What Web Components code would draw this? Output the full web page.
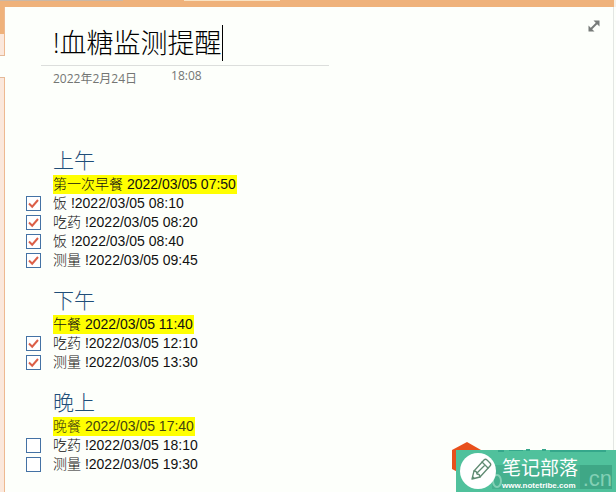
<!DOCTYPE html>
<html lang="zh-CN">
<head>
<meta charset="utf-8">
<title>!血糖监测提醒</title>
<style>
  html, body { height: 100%; }
  body {
    margin: 0;
    overflow: hidden;
    background: #fdfffb;
    font-family: "Liberation Sans", "Noto Sans CJK SC", sans-serif;
  }
</style>
</head>
<body>
<note-window>
  <note-title slot="head" date="2022年2月24日" time="18:08">!血糖监测提醒</note-title>
  <note-section heading="上午" mark="第一次早餐 2022/03/05 07:50">
    <todo-item checked>饭 !2022/03/05 08:10</todo-item>
    <todo-item checked>吃药 !2022/03/05 08:20</todo-item>
    <todo-item checked>饭 !2022/03/05 08:40</todo-item>
    <todo-item checked>测量 !2022/03/05 09:45</todo-item>
  </note-section>
  <note-section heading="下午" mark="午餐 2022/03/05 11:40">
    <todo-item checked>吃药 !2022/03/05 12:10</todo-item>
    <todo-item checked>测量 !2022/03/05 13:30</todo-item>
  </note-section>
  <note-section heading="晚上" mark="晚餐 2022/03/05 17:40" soft>
    <todo-item>吃药 !2022/03/05 18:10</todo-item>
    <todo-item>测量 !2022/03/05 19:30</todo-item>
  </note-section>
  <site-badge slot="badge"></site-badge>
</note-window>

<script>
(() => {
  class NoteWindow extends HTMLElement {
    constructor() {
      super();
      this.attachShadow({ mode: 'open' });
      this.shadowRoot.innerHTML = `
        <style>
          :host {
            display: grid;
            grid-template: 7px 1fr / 5px 1fr;
            position: relative;
            height: 100%;
          }
          .bar {
            grid-column: 1 / -1;
            background: linear-gradient(90deg, #cbb8a6 0 123px, #efb27b 123px 184px, #f9e3c4 184px 280px, #efb27b 280px) top / 100% 1px no-repeat #efb27b;
            border-right: 2px solid #f4f0e8;
          }
          .rail { display: flex; flex-direction: column; }
          .rail i { box-sizing: border-box; border-right: 1px solid #eeb990; background: #fbe8dc; }
          .rail .current { height: 27px; background: #efb27b; }
          .rail .tab { height: 22px; border-bottom: 1px solid #e3b99a; }
          .rail .gap { height: 21px; background: none; border: 0; }
          .rail .rest { flex: 1; border-top: 1px solid #e3b99a; }
          main {
            box-sizing: border-box;
            padding: 17px 0 0 20px;
            margin-right: 2px;
            border-right: 1px solid #e3e6e3;
          }
          .body { display: grid; gap: 16px; padding-top: 57px; }
          button {
            position: absolute;
            top: 18px;
            right: 14px;
            padding: 2px;
            border: 0;
            background: none;
          }
          button svg { display: block; }
          ::slotted([slot="badge"]) { position: absolute; right: 0; bottom: 0; }
        </style>
        <div class="bar"></div>
        <div class="rail"><i class="current"></i><i class="tab"></i><i class="gap"></i><i class="rest"></i></div>
        <main>
          <slot name="head"></slot>
          <div class="body"><slot></slot></div>
        </main>
        <button type="button" aria-label="全屏">
          <svg width="12" height="12" viewBox="0 0 12 12">
            <path d="M5.500 .5h6v6zM.5 5.500v6h6z" fill="#777b79"/>
            <path d="M2.500 9.500l7-7" stroke="#777b79" stroke-width="2"/>
          </svg>
        </button>
        <slot name="badge"></slot>
      `;
    }
  }

  class NoteTitle extends HTMLElement {
    constructor() {
      super();
      this.attachShadow({ mode: 'open' });
      this.shadowRoot.innerHTML = `
        <style>
          :host { display: block; width: 50%; max-width: 288px; margin-left: 16px; }
          h1 {
            display: flex;
            align-items: center;
            margin: 0;
            padding: 0 0 4px 12px;
            border-bottom: 1px solid #dcdedc;
            font: 300 27px/37px "Open Sans", "Noto Sans CJK SC", sans-serif;
            color: #000;
          }
          .caret { width: 1px; height: 36px; background: #000; }
          .meta {
            display: flex;
            gap: 34px;
            padding-left: 12px;
            font: 12px/20px "Open Sans", "Noto Sans CJK SC", sans-serif;
            color: #747674;
          }
          .date { padding-top: 3px; }
        </style>
        <h1><slot></slot><span class="caret"></span></h1>
        <div class="meta"><span class="date"></span><span class="time"></span></div>
      `;
    }

    connectedCallback() {
      this.shadowRoot.querySelector('.date').textContent = this.getAttribute('date');
      this.shadowRoot.querySelector('.time').textContent = this.getAttribute('time');
    }
  }

  class NoteSection extends HTMLElement {
    constructor() {
      super();
      this.attachShadow({ mode: 'open' });
      this.shadowRoot.innerHTML = `
        <style>
          :host { display: block; }
          h2 {
            margin: 0 0 0 28px;
            padding-bottom: 2px;
            font: 300 21px/27px "Noto Sans CJK SC", sans-serif;
            color: #1f4e79;
          }
          p { margin: 0 0 0 28px; font-size: 14px; font-weight: 300; line-height: 19px; }
          mark { display: inline-block; padding-right: 1px; background: #ff0; color: #111; }
          :host([soft]) mark { color: #444410; }
        </style>
        <h2></h2>
        <p><mark></mark></p>
        <slot></slot>
      `;
    }

    connectedCallback() {
      this.shadowRoot.querySelector('h2').textContent = this.getAttribute('heading');
      this.shadowRoot.querySelector('mark').textContent = this.getAttribute('mark');
    }
  }

  class TodoItem extends HTMLElement {
    constructor() {
      super();
      this.attachShadow({ mode: 'open' });
      this.shadowRoot.innerHTML = `
        <style>
          :host { display: block; font-size: 14px; font-weight: 300; line-height: 19px; color: #111; }
          label { display: flex; align-items: center; gap: 12px; height: 19px; }
          input {
            appearance: none;
            box-sizing: border-box;
            width: 15px;
            height: 15px;
            margin: 0 0 0 1px;
            border: 1px solid #4472a4;
            background: #fff;
          }
          input:checked {
            background: #fff url("data:image/svg+xml,%3Csvg xmlns='http://www.w3.org/2000/svg' viewBox='0 0 13 13'%3E%3Cpath d='M2 6.500L5.200 9.700 11 3' fill='none' stroke='%23dc5f47' stroke-width='2'/%3E%3C/svg%3E");
          }
        </style>
        <label><input type="checkbox"><span><slot></slot></span></label>
      `;
    }

    connectedCallback() {
      this.shadowRoot.querySelector('input').checked = this.hasAttribute('checked');
    }
  }

  class SiteBadge extends HTMLElement {
    constructor() {
      super();
      this.attachShadow({ mode: 'open' });
      this.shadowRoot.innerHTML = `
        <style>
          :host { display: block; width: 164px; height: 50px; }
          .back { position: absolute; left: 0; top: 0; }
          .ghost {
            position: absolute;
            right: 4px;
            bottom: 2px;
            font: 22px/22px "Liberation Sans", sans-serif;
            color: #83d0b5;
          }
          a {
            position: absolute;
            inset: 8px 0 0 4px;
            display: flex;
            align-items: center;
            gap: 6px;
            padding-left: 4px;
            color: #fff;
            text-decoration: none;
          }
          .text { display: grid; }
          strong { font: 400 19px/28px "Noto Sans CJK SC", sans-serif; }
          small { font: bold 8px/9px "Liberation Sans", sans-serif; }
        </style>
        <svg class="back" width="164" height="50" viewBox="0 0 164 50">
          <path d="M15 0L29 8V27L15 35 0 27V8z" fill="#e8501c"/>
          <path d="M4 8h160v42H4z" fill="#50c19c"/>
          <path d="M46 8h6v2h-6zM57 8h14v1H57zM74 7h4v2h-4zM90 7h4v2h-4zM98 8h56v2H98z" fill="#35a78b"/>
          <path d="M40 23h120v24H40z" fill="#3fa786"/>
          <path d="M40 23h88v24H40z" fill="#46b18f"/>
          <ellipse cx="45" cy="39" rx="4" ry="6" fill="none" stroke="#83d0b5" stroke-width="2"/>
        </svg>
        <span class="ghost">.cn</span>
        <a href="#">
          <svg width="36" height="36" viewBox="0 0 36 36">
            <circle cx="18" cy="18" r="18" fill="#fff"/>
            <g fill="none" stroke="#5f8a72" stroke-width="1.300" stroke-linejoin="round" stroke-linecap="round">
              <path d="M12 26l2-8L24 7c1-1 2-1 3 0l3 3c1 1 1 2 0 3L20 24z"/>
              <path d="M14 18c2 0 3 1 3 3 2 0 3 1 3 3M22 9l6 6M17 20l8-8"/>
            </g>
            <path d="M12 26l.7-3 2.300 2.300z" fill="#5f8a72"/>
          </svg>
          <span class="text"><strong>笔记部落</strong><small>www.notetribe.com</small></span>
        </a>
      `;
    }
  }

  customElements.define('note-window', NoteWindow);
  customElements.define('note-title', NoteTitle);
  customElements.define('note-section', NoteSection);
  customElements.define('todo-item', TodoItem);
  customElements.define('site-badge', SiteBadge);
})();
</script>
</body>
</html>
